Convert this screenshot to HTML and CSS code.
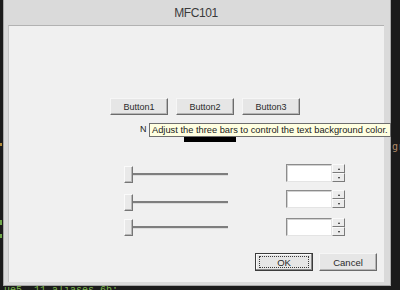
FILE: index.html
```html
<!DOCTYPE html>
<html>
<head>
<meta charset="utf-8">
<link rel="stylesheet" href="styles.css">
</head>
<body>
<div class="screen">
  <div class="term-left">
    <span class="tl a"></span>
    <span class="tl b"></span>
    <span class="tl c"></span>
  </div>
  <div class="window">
    <div class="titlebar">MFC101</div>
    <div class="client">
      <div class="btnrow">
        <div class="btn">Button1</div>
        <div class="btn">Button2</div>
        <div class="btn">Button3</div>
      </div>
      <div class="colorrow">
        <span class="label">N</span>
        <span class="swatch"></span>
      </div>
      <div class="controls">
        <div class="sliders">
          <div class="slider"><span class="track"></span><span class="thumb"></span></div>
          <div class="slider s2"><span class="track"></span><span class="thumb"></span></div>
          <div class="slider s3"><span class="track"></span><span class="thumb"></span></div>
        </div>
        <div class="edits">
          <div class="editrow">
            <div class="edit"></div>
            <div class="spin"><span class="sb"><i class="up"></i></span><span class="sb"><i class="dn"></i></span></div>
          </div>
          <div class="editrow">
            <div class="edit"></div>
            <div class="spin"><span class="sb"><i class="up"></i></span><span class="sb"><i class="dn"></i></span></div>
          </div>
          <div class="editrow e3">
            <div class="edit"></div>
            <div class="spin"><span class="sb"><i class="up"></i></span><span class="sb"><i class="dn"></i></span></div>
          </div>
        </div>
      </div>
      <div class="footer">
        <div class="btn big default"><span class="focus">OK</span></div>
        <div class="btn big">Cancel</div>
      </div>
      <div class="tooltip">Adjust the three bars to control the text background color.</div>
    </div>
  </div>
  <div class="term-right"><span class="gr">gr</span></div>
</div>
<div class="term-bottom">ue5  11 aliases 6b:</div>
</body>
</html>
```
FILE: styles.css
```css
html, body {
  margin: 0;
  padding: 0;
}
body {
  width: 400px;
  height: 290px;
  overflow: hidden;
  background: #1b1b1b;
  font-family: "Liberation Sans", Arial, sans-serif;
}
.screen {
  display: flex;
  height: 286px;
}
.term-left {
  width: 3px;
  display: flex;
  flex-direction: column;
}
.tl {
  display: block;
  width: 2px;
  background: #6fa84a;
}
.tl.a { margin-top: 143px; height: 3px; background: #b08a3a; }
.tl.b { margin-top: 74px; height: 5px; }
.tl.c { margin-top: 9px; height: 4px; }
.window {
  width: 388px;
  height: 286px;
  box-sizing: border-box;
  background: #dadada;
  border: 1px solid #a8a8a8;
  border-top: none;
  display: flex;
  flex-direction: column;
}
.titlebar {
  height: 25px;
  line-height: 27px;
  text-align: center;
  font-size: 12px;
  letter-spacing: -0.4px;
  color: #3a3a3a;
  padding-right: 2px;
}
.client {
  position: relative;
  margin: 0 6px 3px 4px;
  flex: 1;
  box-sizing: border-box;
  background: #f0f0f0;
  border-top: 1px solid #b2b2b2;
  border-left: 1px solid #c6c6c6;
  display: flex;
  flex-direction: column;
  font-size: 9px;
  color: #1e1e1e;
}
.btn {
  box-sizing: border-box;
  width: 58px;
  height: 17px;
  background: #e6e6e6;
  border-top: 1px solid #f6f6f6;
  border-left: 1px solid #f6f6f6;
  border-right: 1px solid #6c6c6c;
  border-bottom: 1px solid #6c6c6c;
  box-shadow: inset -1px -1px 0 #b5b5b5;
  display: flex;
  align-items: center;
  justify-content: center;
  font-size: 9px;
  color: #2a2a2a;
}
.btnrow {
  display: flex;
  gap: 8px;
  margin-top: 72px;
  padding-left: 101px;
}
.colorrow {
  display: flex;
  align-items: flex-start;
  height: 20px;
  margin-top: 8px;
  padding-left: 131px;
}
.label {
  font-size: 9px;
  line-height: 11px;
  margin-top: 1px;
  color: #222;
}
.swatch {
  width: 52px;
  height: 12px;
  background: #000;
  margin-left: 37px;
  margin-top: 7px;
}
.controls {
  display: flex;
  margin-top: 21px;
}
.sliders {
  display: flex;
  flex-direction: column;
  padding-left: 115px;
  padding-top: 2px;
  width: 104px;
}
.slider {
  position: relative;
  height: 17px;
  width: 104px;
  display: flex;
  align-items: center;
}
.slider.s2 { margin-top: 11px; }
.slider.s3 { margin-top: 8px; }
.track {
  display: block;
  width: 100%;
  height: 2px;
  background: #7e7e7e;
  border-bottom: 1px solid #dcdcdc;
}
.thumb {
  position: absolute;
  left: 0;
  top: 0;
  box-sizing: border-box;
  width: 9px;
  height: 17px;
  background: #e9e9e9;
  border-top: 1px solid #fafafa;
  border-left: 1px solid #fafafa;
  border-right: 1px solid #767676;
  border-bottom: 1px solid #767676;
  box-shadow: inset -1px -1px 0 #b8b8b8;
}
.edits {
  display: flex;
  flex-direction: column;
  margin-left: 58px;
}
.editrow {
  display: flex;
  height: 18px;
}
.editrow + .editrow { margin-top: 8px; }
.editrow.e3 { margin-top: 10px; }
.edit {
  box-sizing: border-box;
  width: 46px;
  height: 18px;
  background: #fff;
  border-top: 1px solid #8c8c8c;
  border-left: 1px solid #8c8c8c;
  border-right: 1px solid #e4e4e4;
  border-bottom: 1px solid #e4e4e4;
  box-shadow: inset 1px 1px 0 #d2d2d2;
}
.spin {
  display: flex;
  flex-direction: column;
  width: 13px;
}
.sb {
  box-sizing: border-box;
  height: 9px;
  background: #ececec;
  border-top: 1px solid #fafafa;
  border-left: 1px solid #fafafa;
  border-right: 1px solid #7a7a7a;
  border-bottom: 1px solid #7a7a7a;
  display: flex;
  align-items: center;
  justify-content: center;
}
.sb i {
  width: 0;
  height: 0;
  border-left: 1.5px solid transparent;
  border-right: 1.5px solid transparent;
}
.sb i.up { border-bottom: 2px solid #222; }
.sb i.dn { border-top: 2px solid #222; }
.footer {
  display: flex;
  justify-content: flex-end;
  gap: 6px;
  padding-right: 7px;
  margin-top: 17px;
}
.btn.big {
  height: 18px;
  font-size: 9.5px;
}
.btn.default {
  border: 1px solid #3c3c3c;
  box-shadow: inset -1px -1px 0 #8a8a8a, inset 1px 1px 0 #fafafa;
}
.focus {
  box-sizing: border-box;
  width: 50px;
  height: 12px;
  border: 1px dotted #3a3a3a;
  display: flex;
  align-items: center;
  justify-content: center;
}
.tooltip {
  position: absolute;
  left: 140px;
  top: 97px;
  width: 242px;
  height: 14px;
  box-sizing: border-box;
  background: #ffffe1;
  border: 1px solid #6e6e6e;
  font-size: 9.3px;
  line-height: 12px;
  padding-left: 2px;
  color: #1a1a1a;
  white-space: nowrap;
}
.term-right {
  flex: 1;
  overflow: hidden;
  position: relative;
  font-family: "DejaVu Sans Mono", monospace;
  font-size: 10px;
  color: #b08a6a;
}
.gr {
  position: absolute;
  left: 1px;
  top: 141px;
}
.term-bottom {
  height: 4px;
  overflow: hidden;
  font-family: "Liberation Mono", monospace;
  font-size: 10px;
  line-height: 10px;
  color: #7cb54e;
  white-space: pre;
  padding-left: 4px;
}
```
